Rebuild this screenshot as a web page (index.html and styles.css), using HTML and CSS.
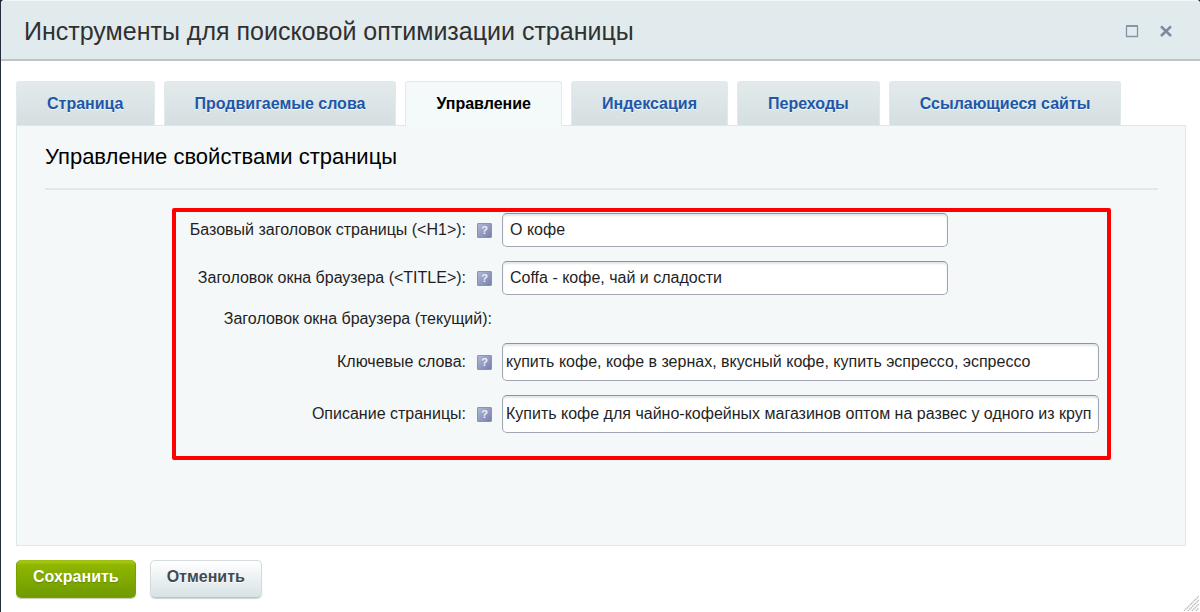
FILE: index.html
```html
<!DOCTYPE html>
<html lang="ru">
<head>
<meta charset="utf-8">
<title>Инструменты для поисковой оптимизации страницы</title>
<link rel="stylesheet" href="styles.css">
</head>
<body>
<main class="dialog">
  <header class="titlebar">
    <h1 class="title">Инструменты для поисковой оптимизации страницы</h1>
    <div class="window-actions">
      <button type="button" class="icon-button" aria-label="Развернуть"><svg width="14" height="14" viewBox="0 0 14 14" fill="none" stroke="#8593ab"><path d="M1.5 2v10.5h11V2" stroke-width="1.3"/><path d="M1 2h12" stroke-width="2"/></svg></button>
      <button type="button" class="icon-button" aria-label="Закрыть"><svg width="14" height="14" viewBox="0 0 14 14" fill="none" stroke="#7b8aa3" stroke-width="2.6"><path d="M2 2.4l10 9.6M12 2.4L2 12"/></svg></button>
    </div>
  </header>
  <div class="content">
    <nav class="tabs">
      <a class="tab" href="#page">Страница</a>
      <a class="tab" href="#words">Продвигаемые слова</a>
      <a class="tab tab-active" href="#manage" aria-current="page">Управление</a>
      <a class="tab" href="#index">Индексация</a>
      <a class="tab" href="#visits">Переходы</a>
      <a class="tab" href="#links">Ссылающиеся сайты</a>
    </nav>
    <section class="panel">
      <h2 class="panel-title">Управление свойствами страницы</h2>
      <form class="fields" id="seo">
        <div class="row">
          <label class="label" for="h1">Базовый заголовок страницы (&lt;H1&gt;):</label>
          <button type="button" class="hint" aria-label="Подсказка">?</button>
          <input class="input input-short" id="h1" value="О кофе">
        </div>
        <div class="row">
          <label class="label" for="title">Заголовок окна браузера (&lt;TITLE&gt;):</label>
          <button type="button" class="hint" aria-label="Подсказка">?</button>
          <input class="input input-short" id="title" value="Coffa - кофе, чай и сладости">
        </div>
        <div class="row">
          <span class="label label-wide">Заголовок окна браузера (текущий):</span>
        </div>
        <div class="row">
          <label class="label" for="keywords">Ключевые слова:</label>
          <button type="button" class="hint" aria-label="Подсказка">?</button>
          <input class="input input-long" id="keywords" value="купить кофе, кофе в зернах, вкусный кофе, купить эспрессо, эспрессо">
        </div>
        <div class="row">
          <label class="label" for="description">Описание страницы:</label>
          <button type="button" class="hint" aria-label="Подсказка">?</button>
          <input class="input input-long" id="description" value="Купить кофе для чайно-кофейных магазинов оптом на развес у одного из круп">
        </div>
      </form>
    </section>
    <footer class="actions">
      <button type="submit" form="seo" class="button button-save">Сохранить</button>
      <button type="button" class="button button-cancel">Отменить</button>
    </footer>
  </div>
  <svg class="grip" width="16" height="16" viewBox="0 0 16 16" stroke="#b9b9b9" stroke-width="1.4" stroke-dasharray="1.4 .6" aria-hidden="true"><path d="M1 16L16 1M5 16L16 5M9 16l7-7M13 16l3-3"/></svg>
</main>
</body>
</html>
```
FILE: styles.css
```css
* { box-sizing: border-box; }

body {
  margin: 0;
  background: #252c3b;
  font-family: "Liberation Sans", Arial, sans-serif;
  font-size: 16px;
  color: #1f1f1f;
}

.dialog {
  position: relative;
  min-height: 100vh;
  margin-left: 1px;
  background: #fff;
  border-radius: 4px 4px 0 0;
}

.titlebar {
  display: flex;
  align-items: center;
  justify-content: space-between;
  height: 61px;
  padding: 1px 27px 0 23px;
  background: #e1eaed;
  border-top: 1px solid #f4f7f8;
  border-bottom: 2px solid #c0c4c7;
  border-radius: 4px 4px 0 0;
}

.title {
  margin: 0;
  font-size: 25px;
  font-weight: 400;
  line-height: 30px;
  color: #303030;
}

.window-actions { display: flex; gap: 20px; }

.icon-button {
  display: block;
  padding: 0;
  border: 0;
  background: none;
}

.icon-button svg { display: block; }

.content { padding: 20px 14px 14px 15px; }

.tabs {
  display: flex;
  gap: 9px;
}

.tab {
  height: 44px;
  padding: 0 30px;
  border: 1px solid #e0eaec;
  border-bottom: 0;
  border-radius: 3px 3px 0 0;
  background: linear-gradient(#e3eaec, #d4dfe1);
  font-weight: 700;
  line-height: 43px;
  color: #2057a8;
  text-decoration: none;
  text-shadow: 0 1px 0 #f3f8f8;
}

.tab-active {
  position: relative;
  height: 45px;
  margin-bottom: -1px;
  background: #f4f9fa;
  color: #000;
}

.panel {
  min-height: 421px;
  padding: 17px 27px 28px 28px;
  border: 1px solid #dce8ec;
  background: #f4f8f9;
}

.panel-title {
  margin: 0 0 18px;
  padding-bottom: 17px;
  border-bottom: 2px solid #e3e7e9;
  font-size: 22px;
  font-weight: 400;
  line-height: 28px;
  color: #000;
}

.fields {
  display: flex;
  flex-direction: column;
  gap: 14px;
  margin: 0 47px 0 127px;
  padding: 1px 8px 23px 0;
  border: 4px solid #f00;
  border-radius: 2px;
}

.row {
  display: flex;
  align-items: center;
}

.label {
  flex: 0 0 290px;
  text-align: right;
  line-height: 20px;
}

.label-wide { flex-basis: 316px; }

.hint {
  width: 15px;
  height: 15px;
  margin: 0 10px 0 11px;
  padding: 0;
  border: 1px solid #8b91b8;
  border-radius: 1px;
  background: linear-gradient(135deg, #b1b8d5, #767fae);
  font: 700 11px/13px "Liberation Sans", Arial, sans-serif;
  color: #eef0fa;
}

.input {
  min-width: 0;
  border: 1px solid #a0a7b3;
  border-top-color: #8c959f;
  border-radius: 5px;
  background: #fff;
  box-shadow: inset 0 2px 2px #e3e7e9;
  font: 16px "Liberation Sans", Arial, sans-serif;
  color: #1f1f1f;
}

.input-short {
  flex: 0 1 446px;
  height: 34px;
  padding: 0 7px;
}

.input-long {
  flex: 1;
  height: 38px;
  padding: 0 3px 1px;
}

.actions {
  display: flex;
  gap: 14px;
  padding-top: 14px;
}

.button {
  height: 38px;
  padding: 0 16px 4px;
  border-radius: 5px;
  font: 700 16px "Liberation Sans", Arial, sans-serif;
}

.button-save {
  border: 1px solid #77a100;
  border-top-color: #9dbf16;
  background: linear-gradient(#a9ca0a, #8fb500 12%, #6f9b00);
  box-shadow: 0 1px 1px #c5ccb5;
  color: #fff;
  text-shadow: 0 1px 1px #668700;
}

.button-cancel {
  border: 1px solid #d5dadd;
  border-bottom-color: #bdc4c7;
  background: linear-gradient(#fff, #d7e2e5);
  box-shadow: 0 1px 1px #d0d4d6;
  color: #3f4b54;
  text-shadow: 0 1px 0 #fff;
}

.grip {
  position: absolute;
  right: 1px;
  bottom: 1px;
}
```
